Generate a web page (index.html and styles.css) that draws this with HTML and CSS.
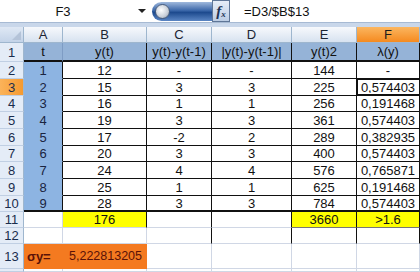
FILE: index.html
```html
<!DOCTYPE html>
<html lang="en">
<head>
  <meta charset="UTF-8">
  <title>Sheet</title>
  <link rel="stylesheet" href="styles.css">
</head>
<body>
  <div class="fbar">
    <div class="namebox"><span>F3</span><i class="drop"></i></div>
    <div class="pill"><i class="knob"></i></div>
    <div class="fx"><b>f</b><small>x</small></div>
    <div class="formula">=D3/$B$13</div>
  </div>
  <div class="strip"></div>

  <div class="sheet">
    <!-- column headers -->
    <div class="corner"><i></i></div>
    <div class="ch">A</div><div class="ch">B</div><div class="ch">C</div>
    <div class="ch">D</div><div class="ch">E</div><div class="ch sel">F</div>

    <!-- row 1 -->
    <div class="rh">1</div>
    <div class="c hd ca1 thick">t</div><div class="c hd b thick">y(t)</div><div class="c hd b thick">y(t)-y(t-1)</div>
    <div class="c hd b thick">|y(t)-y(t-1)|</div><div class="c hd b thick">y(t)2</div><div class="c hd b thick">λ(y)</div>

    <div class="rh">2</div>
    <div class="c ca">1</div><div class="c b">12</div><div class="c b">-</div><div class="c b">-</div><div class="c b">144</div><div class="c b">-</div>
    <div class="rh sel">3</div>
    <div class="c ca">2</div><div class="c b">15</div><div class="c b">3</div><div class="c b">3</div><div class="c b">225</div><div class="c b cur">0,574403</div>
    <div class="rh">4</div>
    <div class="c ca">3</div><div class="c b">16</div><div class="c b">1</div><div class="c b">1</div><div class="c b">256</div><div class="c b">0,191468</div>
    <div class="rh">5</div>
    <div class="c ca">4</div><div class="c b">19</div><div class="c b">3</div><div class="c b">3</div><div class="c b">361</div><div class="c b">0,574403</div>
    <div class="rh">6</div>
    <div class="c ca">5</div><div class="c b">17</div><div class="c b">-2</div><div class="c b">2</div><div class="c b">289</div><div class="c b">0,382935</div>
    <div class="rh">7</div>
    <div class="c ca">6</div><div class="c b">20</div><div class="c b">3</div><div class="c b">3</div><div class="c b">400</div><div class="c b">0,574403</div>
    <div class="rh">8</div>
    <div class="c ca">7</div><div class="c b">24</div><div class="c b">4</div><div class="c b">4</div><div class="c b">576</div><div class="c b">0,765871</div>
    <div class="rh">9</div>
    <div class="c ca">8</div><div class="c b">25</div><div class="c b">1</div><div class="c b">1</div><div class="c b">625</div><div class="c b">0,191468</div>
    <div class="rh">10</div>
    <div class="c ca thick">9</div><div class="c b thick">28</div><div class="c b thick">3</div><div class="c b thick">3</div><div class="c b thick">784</div><div class="c b thick">0,574403</div>

    <div class="rh">11</div>
    <div class="c"></div><div class="c yel vb">176</div><div class="c vb"></div><div class="c vb"></div><div class="c yel vb db">3660</div><div class="c yel vb db">&gt;1.6</div>
    <div class="rh">12</div>
    <div class="c"></div><div class="c"></div><div class="c vb"></div><div class="c vb"></div><div class="c vb"></div><div class="c vb"></div>
    <div class="rh">13</div>
    <div class="c org sig">σy=</div><div class="c org num">5,222813205</div><div class="c"></div><div class="c"></div><div class="c"></div><div class="c"></div>
    <div class="rh"></div>
    <div class="c"></div><div class="c"></div><div class="c"></div><div class="c"></div><div class="c"></div><div class="c"></div>
  </div>
</body>
</html>
```

FILE: styles.css
```css
body { margin: 0; background: #dbe5f1; font-family: "Liberation Sans", Arial, sans-serif; width: 420px; height: 272px; overflow: hidden; }

/* formula bar */
.fbar { display: flex; height: 23px; background: #fff; border-bottom: 1px solid #a7bad3; box-sizing: border-box; }
.namebox { width: 152px; display: flex; align-items: center; font-size: 13px; color: #111; }
.namebox span { flex: 1; text-align: center; padding-right: 12px; }
.drop { width: 0; height: 0; border-left: 4px solid transparent; border-right: 4px solid transparent;
  border-top: 4px solid #222; margin-right: 6px; }
.pill { width: 60px; margin: 2px 0 1px; border-radius: 10px 0 0 10px;
  background: linear-gradient(#9fb8dc, #3a66a8 45%, #1d4a8e 55%, #5b86c4); display: flex; align-items: center; padding-left: 3px; box-sizing: border-box; }
.knob { width: 13px; height: 13px; border-radius: 50%; background: radial-gradient(circle at 40% 40%, #fff, #c9cfd8 60%, #7e8a99); border: 1px solid #4a5d7c; }
.fx { width: 18px; background: linear-gradient(#e6edf7, #bccde4); border: 1px solid #5f7697; box-sizing: border-box;
  display: flex; align-items: center; justify-content: center; font-family: "Liberation Serif", serif; color: #223355; }
.fx b { font-style: italic; font-size: 15px; }
.fx small { font-style: italic; font-weight: bold; font-size: 9px; margin-top: 5px; }
.formula { flex: 1; font-size: 13px; color: #111; padding-left: 14px; display: flex; align-items: center; }
.strip { height: 4px; background: #c9d7ea; }

/* grid */
.sheet { display: grid; grid-template-columns: 24px 39px 84px 65px 80px 65px 63px;
  grid-template-rows: 16px 19px 17px 17px 16px 17px 17px 16px 17px 17px 16px 16px 16px 25px 3px;
  font-size: 13px; color: #111; background: #fff; }
.corner { background: linear-gradient(#dfe8f4, #c3d3e8); border-right: 1px solid #9eb6ce; border-bottom: 1px solid #9eb6ce; position: relative; }
.corner i { position: absolute; right: 2px; bottom: 2px; width: 0; height: 0;
  border-left: 9px solid transparent; border-bottom: 9px solid #b4c3d8; }
.ch { background: linear-gradient(#f7f9fc, #d7e2f0); border-right: 1px solid #9eb6ce; border-bottom: 1px solid #9eb6ce;
  display: flex; align-items: center; justify-content: center; color: #1b2533; }
.ch.sel { background: linear-gradient(#fbb660, #f58a1f); color: #1b1b1b; }
.rh { background: #e4ecf7; border-right: 1px solid #9eb6ce; border-bottom: 1px solid #c0cfe3;
  display: flex; align-items: center; justify-content: center; color: #1a2d4d; overflow: hidden; }
.rh.sel { background: linear-gradient(90deg, #fbb35a, #f59a30); }

.c { box-sizing: border-box; border-right: 1px solid #d0d7e5; border-bottom: 1px solid #d0d7e5;
  display: flex; align-items: center; justify-content: center; white-space: nowrap; overflow: hidden; }
.b { border-color: #111; }
.hd { background: #95b3d7; }
.ca1 { border-right-color: #7e9cc4; }
.ca { background: #8db4e2; border-right-color: #111; border-bottom-color: #8db4e2; color: #1a2440; }
.thick { border-bottom: 2px solid #111; }
.vb { border-right-color: #111; }
.db { border-bottom-color: #777; }
.yel { background: #ffff00; }
.org { background: #f47a20; border-color: #f47a20; color: #5a1208; }
.sig { justify-content: flex-start; padding-left: 3px; font-weight: bold; font-size: 13px; }
.num { justify-content: flex-end; padding-right: 4px; font-size: 12.5px; }
.cur { position: relative; overflow: visible; }
.cur::after { content: ""; position: absolute; inset: -1px -2px -1px -1px; border: 2px solid #111; box-shadow: inset 0 0 0 1px #fff; }
```
